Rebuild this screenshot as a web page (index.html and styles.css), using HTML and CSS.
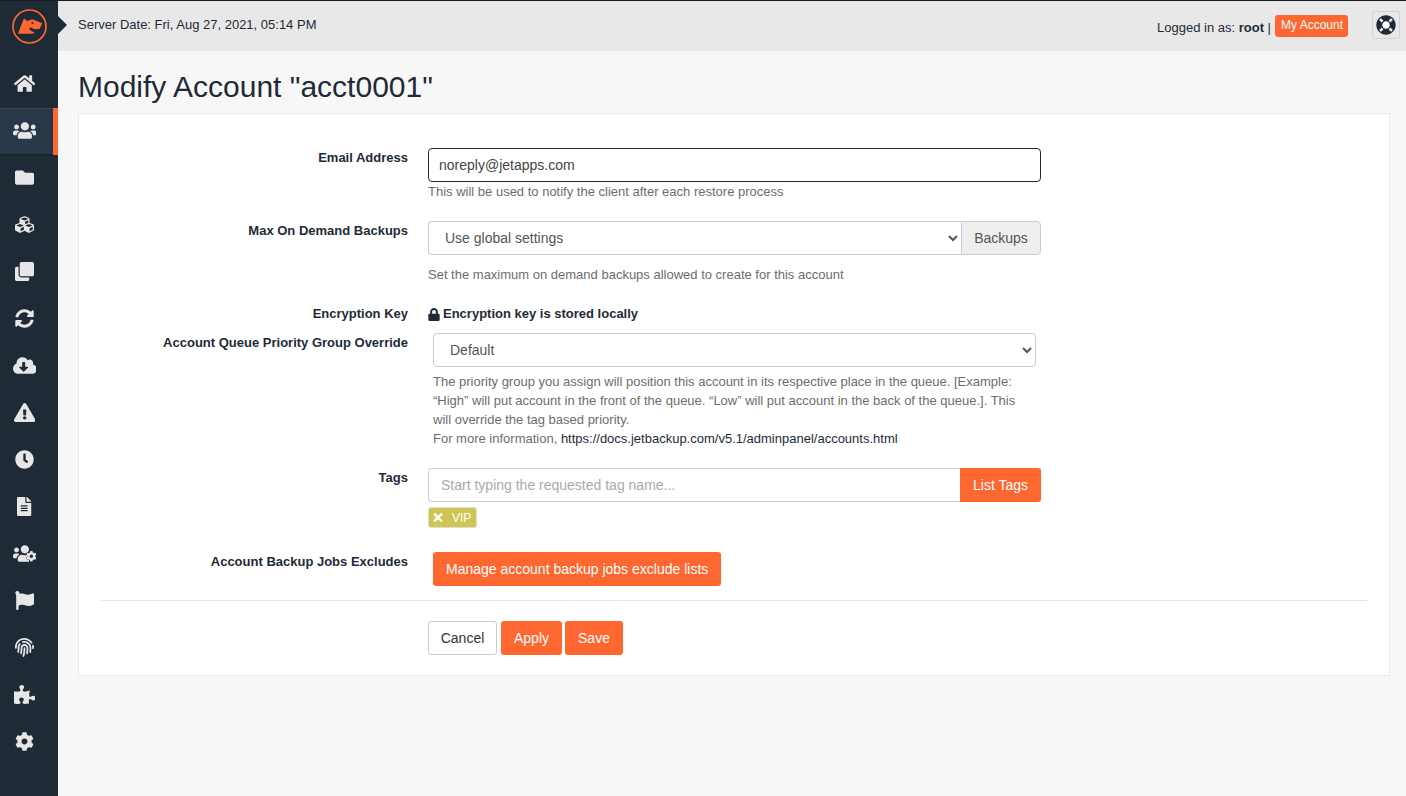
FILE: index.html
```html
<!DOCTYPE html>
<html lang="en">
<head>
<meta charset="utf-8">
<title>Modify Account</title>
<link rel="stylesheet" href="styles.css">
</head>
<body>
<div class="app">
  <nav class="sidebar">
    <div class="logo">
      <svg viewBox="0 0 35 35" width="35" height="35"><circle cx="17.500" cy="17.500" r="16.500" fill="none" stroke="#ff6731" stroke-width="1.700"/><path fill="#ff6731" d="M6 24.800L10 14l2-4.500 3.300 2.500 5-1.700 10 4-2.800 5.600-4.700.3-4.500-1.700-1.300.8 1.300 2 4.500 2.800-3 .7z"/><circle cx="20.500" cy="14" r="1.100" fill="#1e2b37"/></svg>
    </div>
    <a class="nav-item"><svg class="ic" viewBox="0 0 576 512"><path d="M280.37 148.26L96 300.11V464a16 16 0 0 0 16 16l112.06-.29a16 16 0 0 0 15.92-16V368a16 16 0 0 1 16-16h64a16 16 0 0 1 16 16v95.64a16 16 0 0 0 16 16.05L464 480a16 16 0 0 0 16-16V300L295.67 148.26a12.19 12.19 0 0 0-15.3 0zM571.6 251.47L488 182.56V44.05a12 12 0 0 0-12-12h-56a12 12 0 0 0-12 12v72.61L318.47 43a48 48 0 0 0-61 0L4.34 251.47a12 12 0 0 0-1.6 16.9l25.5 31A12 12 0 0 0 45.15 301l235.22-193.74a12.19 12.19 0 0 1 15.3 0L530.9 301a12 12 0 0 0 16.9-1.6l25.5-31a12 12 0 0 0-1.7-16.93z"/></svg></a>
    <a class="nav-item active"><svg class="ic" viewBox="0 0 640 512"><path d="M96 224c35.3 0 64-28.7 64-64s-28.7-64-64-64-64 28.7-64 64 28.7 64 64 64zm448 0c35.3 0 64-28.7 64-64s-28.7-64-64-64-64 28.7-64 64 28.7 64 64 64zm32 32h-64c-17.6 0-33.5 7.1-45.1 18.6 40.3 22.1 68.9 62 75.1 109.4h66c17.7 0 32-14.3 32-32v-32c0-35.3-28.7-64-64-64zm-256 0c61.9 0 112-50.1 112-112S381.9 32 320 32 208 82.1 208 144s50.1 112 112 112zm76.8 32h-8.3c-20.8 10-43.9 16-68.5 16s-47.6-6-68.500-16h-8.300C179.6 288 128 339.6 128 403.2V432c0 26.500 21.500 48 48 48h288c26.500 0 48-21.500 48-48v-28.800c0-63.600-51.600-115.200-115.200-115.200zm-223.700-13.400C161.5 263.100 145.600 256 128 256H64c-35.300 0-64 28.700-64 64v32c0 17.700 14.300 32 32 32h65.900c6.300-47.400 34.900-87.300 75.200-109.400z"/></svg></a>
    <a class="nav-item"><svg class="ic" viewBox="0 0 512 512"><path d="M464 128H272l-64-64H48C21.49 64 0 85.49 0 112v288c0 26.51 21.49 48 48 48h416c26.51 0 48-21.49 48-48V176c0-26.51-21.49-48-48-48z"/></svg></a>
    <a class="nav-item"><svg class="ic" viewBox="0 0 512 512"><path d="M488.600 250.200L392 214V105.500c0-15-9.300-28.400-23.400-33.700l-100-37.500c-8.100-3.100-17.100-3.100-25.300 0l-100 37.500c-14.100 5.300-23.400 18.700-23.400 33.700V214l-96.600 36.200C9.300 255.500 0 268.900 0 283.900V394c0 13.600 7.700 26.100 19.900 32.200l100 50c10.100 5.100 22.100 5.100 32.200 0l103.900-52 103.900 52c10.100 5.100 22.100 5.100 32.200 0l100-50c12.200-6.100 19.900-18.600 19.900-32.200V283.900c0-15-9.300-28.400-23.400-33.700zM358 214.800l-85 31.900v-68.200l85-37v73.300zM154 104.100l102-38.200 102 38.200v.6l-102 41.400-102-41.400v-.6zm84 291.100l-85 42.500v-79.100l85-38.800v75.400zm0-112l-102 41.400-102-41.400v-.6l102-38.200 102 38.200v.6zm240 112l-85 42.500v-79.100l85-38.800v75.400zm0-112l-102 41.400-102-41.400v-.6l102-38.200 102 38.200v.6z"/></svg></a>
    <a class="nav-item"><svg class="ic" viewBox="0 0 512 512"><path d="M464 0c26.510 0 48 21.490 48 48v288c0 26.510-21.490 48-48 48H176c-26.510 0-48-21.490-48-48V48c0-26.510 21.490-48 48-48h288M176 416c-44.112 0-80-35.888-80-80V128H48c-26.510 0-48 21.490-48 48v288c0 26.510 21.490 48 48 48h288c26.510 0 48-21.490 48-48v-48H176z"/></svg></a>
    <a class="nav-item"><svg class="ic" viewBox="0 0 512 512"><path d="M370.72 133.28C339.458 104.008 298.888 87.962 255.848 88c-77.458.068-144.328 53.178-162.791 126.85-1.344 5.363-6.122 9.15-11.651 9.15H24.103c-7.498 0-13.194-6.807-11.807-14.176C33.933 94.924 134.813 8 256 8c66.448 0 126.791 26.136 171.315 68.685L463.03 40.97C478.149 25.851 504 36.559 504 57.941V192c0 13.255-10.745 24-24 24H345.941c-21.382 0-32.09-25.851-16.971-40.971l41.75-41.749zM32 296h134.059c21.382 0 32.09 25.851 16.971 40.971l-41.75 41.75c31.262 29.273 71.835 45.319 114.876 45.28 77.418-.07 144.315-53.144 162.787-126.849 1.344-5.363 6.122-9.15 11.651-9.15h57.304c7.498 0 13.194 6.807 11.807 14.176C478.067 417.076 377.187 504 256 504c-66.448 0-126.791-26.136-171.315-68.685L48.97 471.03C33.851 486.149 8 475.441 8 454.059V320c0-13.255 10.745-24 24-24z"/></svg></a>
    <a class="nav-item"><svg class="ic" viewBox="0 0 640 512"><path d="M537.6 226.6c4.100-10.700 6.400-22.400 6.400-34.600 0-53-43-96-96-96-19.700 0-38.100 6-53.300 16.200C367 64.200 315.300 32 256 32c-88.400 0-160 71.600-160 160 0 2.700.1 5.400.2 8.100C40.200 219.800 0 273.200 0 336c0 79.500 64.500 144 144 144h368c70.700 0 128-57.300 128-128 0-61.900-44-113.600-102.400-125.400zm-132.900 88.700L299.300 420.700c-6.200 6.200-16.400 6.200-22.600 0L171.300 315.300c-10.100-10.100-2.900-27.300 11.300-27.300H248V176c0-8.800 7.200-16 16-16h48c8.800 0 16 7.200 16 16v112h65.400c14.200 0 21.400 17.200 11.300 27.300z"/></svg></a>
    <a class="nav-item"><svg class="ic" viewBox="0 0 576 512"><path d="M569.517 440.013C587.975 472.007 564.806 512 527.94 512H48.054c-36.937 0-59.999-40.055-41.577-71.987L246.423 23.985c18.467-32.009 64.72-31.951 83.154 0l239.94 416.028zM288 354c-25.405 0-46 20.595-46 46s20.595 46 46 46 46-20.595 46-46-20.595-46-46-46zm-43.673-165.346l7.418 136c.347 6.364 5.609 11.346 11.982 11.346h48.546c6.373 0 11.635-4.982 11.982-11.346l7.418-136c.375-6.874-5.098-12.654-11.982-12.654h-63.383c-6.884 0-12.356 5.780-11.981 12.654z"/></svg></a>
    <a class="nav-item"><svg class="ic" viewBox="0 0 512 512"><path d="M256,8C119,8,8,119,8,256S119,504,256,504,504,393,504,256,393,8,256,8Zm92.490,313h0l-20,25a16,16,0,0,1-22.490,2.500h0l-67-49.720a40,40,0,0,1-15-31.230V112a16,16,0,0,1,16-16h32a16,16,0,0,1,16,16V256l58,42.500A16,16,0,0,1,348.490,321Z"/></svg></a>
    <a class="nav-item"><svg class="ic" viewBox="0 0 384 512"><path d="M224 136V0H24C10.700 0 0 10.700 0 24v464c0 13.300 10.700 24 24 24h336c13.300 0 24-10.700 24-24V160H248c-13.200 0-24-10.800-24-24zm64 236c0 6.600-5.400 12-12 12H108c-6.600 0-12-5.400-12-12v-8c0-6.600 5.400-12 12-12h168c6.600 0 12 5.400 12 12v8zm0-64c0 6.600-5.400 12-12 12H108c-6.600 0-12-5.400-12-12v-8c0-6.600 5.400-12 12-12h168c6.600 0 12 5.400 12 12v8zm0-72v8c0 6.600-5.400 12-12 12H108c-6.600 0-12-5.400-12-12v-8c0-6.600 5.400-12 12-12h168c6.600 0 12 5.400 12 12zm96-114.100v6.100H256V0h6.100c6.400 0 12.500 2.500 17 7l97.900 98c4.500 4.500 7 10.600 7 16.900z"/></svg></a>
    <a class="nav-item"><svg class="ic" viewBox="0 0 640 512"><path d="M96 224c35.300 0 64-28.700 64-64s-28.700-64-64-64-64 28.700-64 64 28.700 64 64 64zm224 32c61.900 0 112-50.100 112-112S381.900 32 320 32 208 82.100 208 144s50.100 112 112 112zM173.100 274.600C161.500 263.100 145.600 256 128 256H64c-35.300 0-64 28.700-64 64v32c0 17.700 14.300 32 32 32h65.900c6.300-47.400 34.900-87.300 75.200-109.400zM128 403.200V432c0 26.500 21.500 48 48 48h260V288h-39.200h-8.300c-20.800 10-43.900 16-68.500 16s-47.600-6-68.500-16h-8.300C179.600 288 128 339.600 128 403.200z"/><path class="cogcut" transform="translate(352 186) scale(.56)" d="M487.400 315.700l-42.600-24.600c4.300-23.200 4.300-47 0-70.200l42.600-24.600c4.900-2.800 7.100-8.600 5.500-14-11.100-35.600-30-67.800-54.700-94.600-3.800-4.100-10-5.100-14.800-2.300L380.800 110c-17.900-15.400-38.500-27.300-60.800-35.100V25.800c0-5.600-3.900-10.500-9.400-11.700-36.700-8.200-74.300-7.800-109.200 0-5.500 1.200-9.400 6.100-9.400 11.700V75c-22.200 7.900-42.800 19.800-60.800 35.100L88.700 85.500c-4.900-2.800-11-1.900-14.800 2.300-24.700 26.700-43.600 58.900-54.700 94.600-1.700 5.400.6 11.200 5.500 14L67.300 221c-4.300 23.200-4.300 47 0 70.200l-42.600 24.600c-4.900 2.800-7.100 8.600-5.500 14 11.100 35.600 30 67.800 54.700 94.600 3.800 4.100 10 5.100 14.800 2.300l42.600-24.600c17.900 15.400 38.500 27.300 60.800 35.100v49.200c0 5.600 3.900 10.500 9.400 11.700 36.700 8.200 74.300 7.800 109.200 0 5.500-1.200 9.400-6.100 9.400-11.700v-49.200c22.200-7.900 42.800-19.800 60.800-35.100l42.600 24.600c4.900 2.800 11 1.900 14.800-2.300 24.700-26.700 43.600-58.900 54.700-94.600 1.500-5.500-.7-11.300-5.600-14.100zM256 336c-44.100 0-80-35.900-80-80s35.900-80 80-80 80 35.900 80 80-35.900 80-80 80z"/></svg></a>
    <a class="nav-item"><svg class="ic" viewBox="0 0 512 512"><path d="M349.565 98.783C295.978 98.783 251.721 64 184.348 64c-24.955 0-47.309 4.384-68.045 12.013a55.947 55.947 0 0 0 3.586-23.562C118.117 24.015 94.806 1.206 66.338.048 34.345-1.254 8 24.296 8 56c0 19.026 9.497 35.825 24 45.945V488c0 13.255 10.745 24 24 24h16c13.255 0 24-10.745 24-24v-94.400c28.311-12.064 63.582-22.122 114.435-22.122 53.588 0 97.844 34.783 165.217 34.783 48.169 0 86.667-16.294 122.505-40.858C506.840 359.452 512 349.571 512 339.045v-243.100c0-23.393-24.269-38.870-45.485-29.016-34.338 15.948-76.454 31.854-116.950 31.854z"/></svg></a>
    <a class="nav-item"><svg class="ic" viewBox="0 0 512 512"><path d="M256.120 245.960c-13.250 0-24 10.740-24 24 1.140 72.250-8.140 141.900-27.700 211.550-2.730 9.720 2.150 30.490 23.120 30.490 10.480 0 20.110-6.920 23.090-17.520 13.530-47.910 31.040-125.410 29.480-224.520.01-13.250-10.730-24-23.990-24zm-.86-81.730C194 164.160 151.250 211.300 152.100 265.320c.75 47.940-3.750 95.910-13.370 142.550-2.690 12.980 5.670 25.690 18.640 28.360 13.050 2.670 25.670-5.660 28.360-18.640 10.340-50.090 15.170-101.580 14.370-153.020-.41-25.950 19.920-52.490 54.450-52.340 31.310.47 57.150 25.340 57.620 55.470.77 48.050-2.810 96.330-10.610 143.550-2.170 13.060 6.690 25.420 19.760 27.580 19.970 3.330 26.810-15.100 27.580-19.770 8.280-50.030 12.060-101.210 11.270-152.110-.88-55.800-47.940-101.880-104.910-102.720zm-110.690-19.780c-10.300-8.340-25.370-6.800-33.760 3.480-25.620 31.500-39.390 71.280-38.750 112 .59 37.580-2.470 75.270-9.110 112.050-2.340 13.050 6.310 25.530 19.360 27.890 20.110 3.500 27.070-14.810 27.890-19.360 7.190-39.840 10.500-80.660 9.860-121.330-.47-29.880 9.200-57.880 28-80.970 8.350-10.280 6.790-25.390-3.490-33.760zm109.470-62.330c-15.410-.41-30.870 1.440-45.780 4.970-12.890 3.060-20.870 15.980-17.830 28.890 3.060 12.890 16 20.830 28.890 17.830 11.050-2.610 22.470-3.770 34-3.690 75.430 1.130 137.730 61.500 138.880 134.580.59 37.880-1.280 76.110-5.580 113.630-1.500 13.170 7.950 25.080 21.110 26.580 16.720 1.950 25.510-11.880 26.580-21.110a929.060 929.060 0 0 0 5.890-119.850c-1.560-98.750-85.070-180.330-186.160-181.830zm252.070 121.450c-2.860-12.920-15.510-21.200-28.610-18.270-12.940 2.860-21.120 15.660-18.260 28.610 4.710 21.410 4.910 37.410 4.700 61.600-.11 13.270 10.550 24.090 23.800 24.200h.2c13.170 0 23.890-10.610 24-23.800.18-22.180.4-44.110-5.830-72.340zm-40.120-90.720C417.290 43.460 337.600 1.290 252.810.02 183.020-.82 118.470 24.910 70.460 72.940 24.090 119.370-.9 181.040.14 246.650l-.12 21.470c-.39 13.250 10.030 24.310 23.280 24.690.23.02.48.02.72.02 12.920 0 23.590-10.300 23.970-23.300l.16-23.640c-.83-52.500 19.160-101.860 56.280-139 38.760-38.800 91.340-59.670 147.680-58.860 69.450 1.030 134.730 35.560 174.620 92.390 7.610 10.860 22.560 13.450 33.420 5.860 10.840-7.620 13.460-22.590 5.840-33.430z"/></svg></a>
    <a class="nav-item"><svg class="ic" viewBox="0 0 576 512"><path d="M519.442 288.651c-41.519 0-59.500 31.593-82.058 31.593C377.409 320.244 432 144 432 144s-196.288 80-196.288-3.297c0-35.827 36.288-46.250 36.288-85.985C272 19.216 243.885 0 210.539 0c-34.654 0-66.366 18.891-66.366 56.346 0 41.364 31.711 59.277 31.711 81.750C175.885 207.719 0 166.758 0 166.758v333.237s178.635 41.047 178.635-28.662c0-22.473-40-40.107-40-81.471 0-37.456 29.250-56.346 63.577-56.346 33.673 0 61.788 19.216 61.788 54.717 0 39.735-36.288 50.158-36.288 85.985 0 60.803 129.675 25.730 181.230 25.730 0 0-34.725-120.101 25.827-120.101 35.962 0 46.423 36.152 86.308 36.152C556.712 416 576 387.990 576 354.443c0-34.199-18.962-65.792-56.558-65.792z"/></svg></a>
    <a class="nav-item"><svg class="ic" viewBox="0 0 512 512"><path d="M487.400 315.700l-42.600-24.600c4.300-23.200 4.300-47 0-70.200l42.600-24.600c4.900-2.800 7.100-8.600 5.500-14-11.100-35.600-30-67.800-54.700-94.600-3.800-4.100-10-5.100-14.800-2.300L380.800 110c-17.900-15.400-38.500-27.300-60.800-35.100V25.800c0-5.600-3.900-10.500-9.400-11.700-36.700-8.200-74.300-7.800-109.200 0-5.500 1.200-9.400 6.100-9.400 11.700V75c-22.200 7.900-42.800 19.800-60.800 35.100L88.700 85.500c-4.900-2.800-11-1.900-14.800 2.300-24.700 26.700-43.600 58.900-54.700 94.600-1.700 5.400.6 11.200 5.500 14L67.300 221c-4.300 23.200-4.300 47 0 70.200l-42.600 24.600c-4.900 2.800-7.100 8.600-5.500 14 11.100 35.600 30 67.800 54.700 94.600 3.800 4.100 10 5.100 14.800 2.300l42.600-24.600c17.900 15.400 38.500 27.300 60.800 35.100v49.200c0 5.600 3.900 10.500 9.400 11.700 36.700 8.200 74.300 7.800 109.200 0 5.500-1.200 9.400-6.100 9.400-11.700v-49.200c22.200-7.900 42.800-19.800 60.800-35.100l42.600 24.600c4.900 2.800 11 1.900 14.800-2.300 24.700-26.700 43.600-58.900 54.700-94.600 1.500-5.500-.7-11.300-5.600-14.100zM256 336c-44.100 0-80-35.900-80-80s35.900-80 80-80 80 35.900 80 80-35.900 80-80 80z"/></svg></a>
  </nav>
  <div class="page">
    <header class="topbar">
      <div class="date">Server Date: Fri, Aug 27, 2021, 05:14 PM</div>
      <div class="user">
        <span>Logged in as: <b>root</b> |</span>
        <a class="acct">My Account</a>
      </div>
      <a class="help">
        <svg viewBox="0 0 512 512" width="20" height="20"><circle cx="256" cy="256" r="240" fill="#fff"/><path fill="#1e2b37" d="M256 8C119.033 8 8 119.033 8 256s111.033 248 248 248 248-111.033 248-248S392.967 8 256 8zm173.696 119.559l-63.399 63.399c-10.987-18.559-26.670-34.252-45.255-45.255l63.399-63.399a218.396 218.396 0 0 1 45.255 45.255zM256 352c-53.019 0-96-42.981-96-96s42.981-96 96-96 96 42.981 96 96-42.981 96-96 96zM127.559 82.304l63.399 63.399c-18.559 10.987-34.252 26.670-45.255 45.255l-63.399-63.399a218.372 218.372 0 0 1 45.255-45.255zM82.304 384.441l63.399-63.399c10.987 18.559 26.670 34.252 45.255 45.255l-63.399 63.399a218.396 218.396 0 0 1-45.255-45.255zm302.137 45.255l-63.399-63.399c18.559-10.987 34.252-26.670 45.255-45.255l63.399 63.399a218.429 218.429 0 0 1-45.255 45.255z"/></svg>
      </a>
    </header>
    <main class="content">
      <h1 class="title">Modify Account "acct0001"</h1>
      <section class="card">
        <div class="row r-email">
          <label class="lbl">Email Address</label>
          <div class="field">
            <input class="input input-focus" type="text" value="noreply@jetapps.com">
            <p class="hint hint-tight">This will be used to notify the client after each restore process</p>
          </div>
        </div>
        <div class="row r-max">
          <label class="lbl">Max On Demand Backups</label>
          <div class="field">
            <div class="group">
              <select class="select select-join"><option>Use global settings</option></select>
              <span class="addon">Backups</span>
            </div>
            <p class="hint hint-loose">Set the maximum on demand backups allowed to create for this account</p>
          </div>
        </div>
        <div class="row r-key">
          <label class="lbl">Encryption Key</label>
          <div class="field keytext">
            <svg viewBox="0 0 448 512" width="12" height="13"><path fill="#1e2b37" d="M400 224h-24v-72C376 68.200 307.800 0 224 0S72 68.200 72 152v72H48c-26.500 0-48 21.500-48 48v192c0 26.500 21.500 48 48 48h352c26.500 0 48-21.500 48-48V272c0-26.500-21.500-48-48-48zm-104 0H152v-72c0-39.700 32.300-72 72-72s72 32.300 72 72v72z"/></svg>
            <b>Encryption key is stored locally</b>
          </div>
        </div>
        <div class="row r-queue">
          <label class="lbl">Account Queue Priority Group Override</label>
          <div class="field indent">
            <select class="select"><option>Default</option></select>
            <p class="hint hint-para">The priority group you assign will position this account in its respective place in the queue. [Example: “High” will put account in the front of the queue. “Low” will put account in the back of the queue.]. This will override the tag based priority.<br>For more information, <a class="doc">https://docs.jetbackup.com/v5.1/adminpanel/accounts.html</a></p>
          </div>
        </div>
        <div class="row r-tags">
          <label class="lbl">Tags</label>
          <div class="field">
            <div class="group">
              <input class="input input-join" type="text" placeholder="Start typing the requested tag name...">
              <a class="btn btn-join">List Tags</a>
            </div>
            <span class="tag">
              <svg viewBox="0 0 352 512" width="10" height="13"><path fill="#fff" d="M242.720 256l100.070-100.070c12.280-12.280 12.280-32.190 0-44.480l-22.240-22.240c-12.280-12.280-32.190-12.280-44.480 0L176 189.280 75.930 89.210c-12.280-12.280-32.190-12.280-44.480 0L9.210 111.450c-12.280 12.280-12.280 32.190 0 44.480L109.280 256 9.210 356.070c-12.280 12.280-12.280 32.190 0 44.480l22.240 22.240c12.280 12.280 32.200 12.280 44.480 0L176 322.720l100.070 100.070c12.280 12.280 32.200 12.280 44.480 0l22.240-22.240c12.280-12.280 12.280-32.190 0-44.480L242.720 256z"/></svg>
              VIP
            </span>
          </div>
        </div>
        <div class="row r-excl">
          <label class="lbl">Account Backup Jobs Excludes</label>
          <div class="field indent"><a class="btn">Manage account backup jobs exclude lists</a></div>
        </div>
        <hr class="rule">
        <div class="row r-actions">
          <span></span>
          <div class="actions">
            <a class="btn btn-light">Cancel</a>
            <a class="btn">Apply</a>
            <a class="btn">Save</a>
          </div>
        </div>
      </section>
    </main>
  </div>
</div>
</body>
</html>
```

FILE: styles.css
```css
* { box-sizing: border-box; }
html, body { margin: 0; height: 100%; }
body {
  font-family: "Liberation Sans", Arial, sans-serif;
  font-size: 13px;
  color: #1e2b37;
  background: #f7f7f7;
  overflow: hidden;
}
.app { display: flex; height: 796px; border-top: 1px solid #1a1a1a; }
.sidebar { width: 58px; flex: none; background: #1e2b37; display: flex; flex-direction: column; }
.logo { height: 60px; display: flex; justify-content: center; padding-top: 8px; }
.logo svg { display: block; }
.nav-item { height: 47px; display: flex; align-items: center; justify-content: center; padding: 0 9px 2px 0; }
.nav-item.active {
  background: #293848;
  border-right: 5px solid #ff6731;
  padding-right: 4px;
  box-shadow: inset 0 1px 0 #3a4856, inset 0 -1px 0 #18222c;
}
.ic { height: 19px; width: auto; fill: #e6e6e6; display: block; }
.cogcut { stroke: #1e2b37; stroke-width: 40; paint-order: stroke; }
.page { flex: 1; min-width: 0; display: flex; flex-direction: column; }
.topbar {
  height: 50px;
  flex: none;
  background: #e8e8e8;
  position: relative;
  display: flex;
  align-items: flex-start;
}
.topbar::before {
  content: "";
  position: absolute;
  left: 0;
  top: 15px;
  border-left: 9px solid #1e2b37;
  border-top: 9px solid transparent;
  border-bottom: 9px solid transparent;
}
.date { padding: 16px 0 0 20px; line-height: 16px; flex: 1; }
.user { display: flex; align-items: flex-start; gap: 4px; padding-top: 14px; }
.user span { padding-top: 5px; line-height: 16px; }
.acct {
  background: #ff6731;
  color: #fff;
  font-size: 12px;
  line-height: 21px;
  height: 22px;
  padding: 0 5px 0 6px;
  border-radius: 3px;
}
.help {
  width: 28px;
  height: 28px;
  margin: 10px 6px 0 24px;
  border: 1px solid #d2d2d2;
  border-radius: 3px;
  display: flex;
  align-items: center;
  justify-content: center;
}
.content { padding: 0 16px 0 20px; }
.title { margin: 0; padding-top: 18px; font-size: 30px; font-weight: 400; line-height: 36px; height: 62px; }
.card {
  background: #fff;
  border: 1px solid #e9e9ee;
  height: 563px;
  padding: 34px 22px 0;
}
.row { display: grid; grid-template-columns: 307px 613px; column-gap: 20px; }
.lbl { font-weight: 700; text-align: right; line-height: 20px; }
.field { min-width: 0; }
.input, .select {
  width: 100%;
  height: 34px;
  font: 14px "Liberation Sans", Arial, sans-serif;
  color: #555;
  background: #fff;
  border: 1px solid #ccc;
  border-radius: 4px;
  outline: none;
}
.input { padding: 0 12px; }
.input::placeholder { color: #aaa; }
.select { padding: 0 8px 0 12px; }
.input-focus { border-color: #1e2b37; padding: 0 10px; color: #444; }
.hint { margin: 0; color: #6d6d6d; font-size: 13px; }
.hint-tight { margin-top: 1px; line-height: 18px; }
.hint-loose { margin-top: 11px; line-height: 18px; }
.hint-para { margin-top: 5px; line-height: 19px; width: 590px; }
.group { display: flex; }
.select-join { flex: 1; border-radius: 4px 0 0 4px; border-right: 0; }
.input-join { flex: 1; border-radius: 4px 0 0 4px; border-right: 0; }
.addon {
  width: 80px;
  height: 34px;
  font-size: 14px;
  background: #eee;
  border: 1px solid #ccc;
  border-radius: 0 4px 4px 0;
  display: flex;
  align-items: center;
  justify-content: center;
  color: #555;
}
.r-email { margin-top: 0; }
.r-max { margin-top: 20px; }
.r-key { margin-top: 20px; }
.r-queue { margin-top: 9px; }
.r-tags { margin-top: 20px; }
.r-excl { margin-top: 24px; }
.keytext { display: flex; align-items: center; gap: 3px; line-height: 20px; }
.indent { padding: 0 5px; }
.doc { color: #1e2b37; }
.btn {
  display: inline-block;
  height: 34px;
  line-height: 34px;
  padding: 0 13px;
  font-size: 14px;
  background: #ff6731;
  color: #fff;
  border-radius: 3px;
  white-space: nowrap;
}
.btn-join { border-radius: 0 3px 3px 0; width: 81px; padding: 0; text-align: center; flex: none; }
.btn-light { background: #fff; color: #333; border: 1px solid #ccc; line-height: 32px; width: 69px; padding: 0; text-align: center; margin-right: 1px; }
.tag {
  display: inline-flex;
  align-items: center;
  gap: 9px;
  height: 21px;
  margin-top: 5px;
  padding: 0 5px 0 4px;
  background: #cfc552;
  border: 1px solid #ddd;
  border-radius: 3px;
  color: #fff;
  font-size: 12px;
  vertical-align: top;
}
.rule { border: 0; border-top: 1px solid #e5e5e5; margin: 14px 0 20px; }
.actions { display: flex; gap: 3px; }
```
